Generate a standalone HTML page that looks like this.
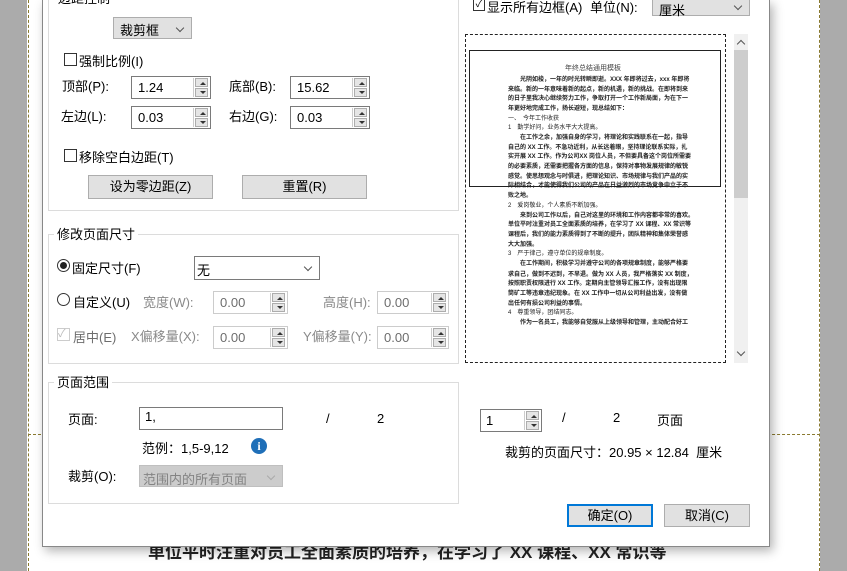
<!DOCTYPE html>
<html><head><meta charset="utf-8"><style>
*{margin:0;padding:0;box-sizing:border-box}
body{width:847px;height:571px;overflow:hidden;position:relative;background:#fff;font-family:"Liberation Sans","Noto Sans CJK SC",sans-serif;font-size:13px;color:#000}
.a{position:absolute;white-space:nowrap}
.gb{position:absolute;border:1px solid #dcdcdc}
.gl{position:absolute;background:#fff;padding:0 3px;line-height:14px}
.inp{position:absolute;border:1px solid #7a7a7a;background:#fff;height:23px;padding:3px 0 0 6px}
.dis{border-color:#ccc;color:#6d6d6d}
.spin{position:absolute;right:1px;top:1px;width:16px;height:19px;border-left:1px solid #ccc}
.spin i{display:block;height:9px;margin:0 1px;background:#e5e5e5;border:1px solid #adadad;position:relative}
.spin i+i{margin-top:1px}
.spin i:after{content:"";position:absolute;left:4px;top:2px;border:3px solid transparent}
.spin .u:after{border-bottom:3px solid #333;top:0}
.spin .d:after{border-top:3px solid #333;top:2px}
.btn{position:absolute;background:#e1e1e1;border:1px solid #adadad;text-align:center;line-height:22px}
.cb{position:absolute;width:13px;height:13px;border:1px solid #333;background:#fff}
.sel{position:absolute;border:1px solid #adadad;background:#e1e1e1;padding:2px 0 0 6px}
.chev{position:absolute;right:8px;top:7px;width:6px;height:6px;border-right:1px solid #555;border-bottom:1px solid #555;transform:rotate(45deg)}
.pl{position:absolute;left:508px;font-size:6px;font-weight:bold;color:#222;white-space:nowrap;letter-spacing:0}
</style></head><body>
<div class="a" style="left:0;top:0;width:27px;height:571px;background:#ababab"></div>
<div class="a" style="left:28px;top:0;height:571px;border-left:1px dashed #8a7a30"></div>
<div class="a" style="left:820px;top:0;width:27px;height:571px;background:#ababab"></div>
<div class="a" style="left:819px;top:0;height:571px;border-left:1px dashed #8a7a30"></div>
<div class="a" style="left:28px;top:434px;width:792px;border-top:1px dashed #8a7a30"></div>
<div class="a" style="left:148px;top:538px;font-size:17px;font-weight:bold;color:#222">单位平时注重对员工全面素质的培养，在学习了 XX 课程、XX 常识等</div>

<div class="a" style="left:42px;top:0;width:728px;height:547px;background:#fff;border:1px solid #888;border-top:none;box-shadow:3px 4px 10px rgba(0,0,0,.3)">
</div>
<div class="gb" style="left:48px;top:-10px;width:411px;height:221px"></div>
<div class="gl" style="left:55px;top:-8px">边距控制</div>
<div class="sel" style="left:113px;top:17px;width:79px;height:22px">裁剪框<div class="chev"></div></div>
<div class="cb" style="left:64px;top:53px"></div><div class="a" style="left:79px;top:51px">强制比例(I)</div>
<div class="a" style="left:62px;top:76px">顶部(P):</div>
<div class="inp" style="left:131px;top:76px;width:80px">1.24<div class="spin"><i class="u"></i><i class="d"></i></div></div>
<div class="a" style="left:229px;top:76px">底部(B):</div>
<div class="inp" style="left:290px;top:76px;width:80px">15.62<div class="spin"><i class="u"></i><i class="d"></i></div></div>
<div class="a" style="left:61px;top:106px">左边(L):</div>
<div class="inp" style="left:131px;top:106px;width:80px">0.03<div class="spin"><i class="u"></i><i class="d"></i></div></div>
<div class="a" style="left:229px;top:106px">右边(G):</div>
<div class="inp" style="left:290px;top:106px;width:80px">0.03<div class="spin"><i class="u"></i><i class="d"></i></div></div>
<div class="cb" style="left:64px;top:149px"></div><div class="a" style="left:79px;top:147px">移除空白边距(T)</div>
<div class="btn" style="left:88px;top:175px;width:125px;height:24px">设为零边距(Z)</div>
<div class="btn" style="left:242px;top:175px;width:125px;height:24px">重置(R)</div>

<div class="gb" style="left:48px;top:234px;width:411px;height:130px"></div>
<div class="gl" style="left:54px;top:228px">修改页面尺寸</div>
<div class="a" style="left:57px;top:259px;width:13px;height:13px;border:1px solid #333;border-radius:50%"><div style="position:absolute;left:2px;top:2px;width:7px;height:7px;border-radius:50%;background:#222"></div></div>
<div class="a" style="left:72px;top:258px">固定尺寸(F)</div>
<div class="a" style="left:194px;top:256px;width:126px;height:24px;border:1px solid #7a7a7a;padding:3px 0 0 2px">无<div class="chev"></div></div>
<div class="a" style="left:57px;top:293px;width:13px;height:13px;border:1px solid #333;border-radius:50%"></div>
<div class="a" style="left:73px;top:292px">自定义(U)</div>
<div class="a" style="left:143px;top:292px;color:#8a8a8a">宽度(W):</div>
<div class="inp dis" style="left:213px;top:291px;width:75px">0.00<div class="spin"><i class="u"></i><i class="d"></i></div></div>
<div class="a" style="left:323px;top:292px;color:#8a8a8a">高度(H):</div>
<div class="inp dis" style="left:377px;top:291px;width:72px">0.00<div class="spin"><i class="u"></i><i class="d"></i></div></div>
<div class="cb" style="left:57px;top:328px;border-color:#ccc;color:#bbb;font-size:11px;line-height:11px">✓</div>
<div class="a" style="left:73px;top:327px;color:#6d6d6d">居中(E)</div>
<div class="a" style="left:131px;top:326px;color:#8a8a8a">X偏移量(X):</div>
<div class="inp dis" style="left:213px;top:326px;width:75px">0.00<div class="spin"><i class="u"></i><i class="d"></i></div></div>
<div class="a" style="left:303px;top:326px;color:#8a8a8a">Y偏移量(Y):</div>
<div class="inp dis" style="left:377px;top:326px;width:72px">0.00<div class="spin"><i class="u"></i><i class="d"></i></div></div>

<div class="gb" style="left:48px;top:382px;width:411px;height:122px"></div>
<div class="gl" style="left:54px;top:376px">页面范围</div>
<div class="a" style="left:68px;top:409px">页面:</div>
<div class="a" style="left:139px;top:407px;width:144px;height:23px;border:1px solid #7a7a7a;padding:1px 0 0 5px">1,</div>
<div class="a" style="left:326px;top:411px">/</div>
<div class="a" style="left:377px;top:411px">2</div>
<div class="a" style="left:142px;top:438px">范例：1,5-9,12</div>
<div class="a" style="left:251px;top:438px;width:16px;height:16px;border-radius:50%;background:#1f6fb8;color:#fff;font-weight:bold;font-size:12px;text-align:center;line-height:16px;font-family:'Liberation Serif',serif">i</div>
<div class="a" style="left:68px;top:466px">裁剪(O):</div>
<div class="a" style="left:139px;top:465px;width:144px;height:22px;background:#ccc;border:1px solid #bfbfbf;color:#838383;padding:3px 0 0 3px">范围内的所有页面<div class="chev" style="border-color:#aaa"></div></div>

<div class="a" style="left:473px;top:-1px;width:12px;height:12px;border:1px solid #333;font-size:10px;line-height:10px;text-align:center">✓</div>
<div class="a" style="left:487px;top:-3px">显示所有边框(A)</div>
<div class="a" style="left:590px;top:-3px">单位(N):</div>
<div class="sel" style="left:652px;top:-8px;width:98px;height:24px;padding-top:7px">厘米<div class="chev" style="top:10px"></div></div>

<div class="a" style="left:465px;top:34px;width:261px;height:329px;border:1px dashed #222"></div>
<div class="a" style="left:469px;top:50px;width:252px;height:137px;border:1px solid #222"></div>
<div class="a" style="left:734px;top:34px;width:14px;height:329px;background:#f0f0f0"></div>
<div class="a" style="left:734px;top:50px;width:14px;height:148px;background:#cdcdcd"></div>
<div class="a" style="left:738px;top:41px;width:6px;height:6px;border-left:1px solid #555;border-top:1px solid #555;transform:rotate(45deg)"></div>
<div class="a" style="left:738px;top:349px;width:6px;height:6px;border-right:1px solid #555;border-bottom:1px solid #555;transform:rotate(45deg)"></div>
<div class="a" style="left:565px;top:63px;font-size:7px;color:#444">年终总结通用模板</div>
<div class="pl" style="top:74px;left:520px">光阴如梭，一年的时光转瞬即逝。XXX 年即将过去，xxx 年即将</div>
<div class="pl" style="top:84px">来临。新的一年意味着新的起点，新的机遇，新的挑战。在即将到来</div>
<div class="pl" style="top:93px">的日子里我决心继续努力工作，争取打开一个工作新局面，为在下一</div>
<div class="pl" style="top:103px">年更好地完成工作，扬长避短，现总结如下：</div>
<div class="pl" style="top:113px;font-weight:normal">一、　今年工作收获</div>
<div class="pl" style="top:122px;font-weight:normal">1　勤学好问，业务水平大大提高。</div>
<div class="pl" style="top:132px;left:520px">在工作之余，加强自身的学习，将理论和实践联系在一起，指导</div>
<div class="pl" style="top:142px">自己的 XX 工作。不急功近利，从长远着眼，坚持理论联系实际，扎</div>
<div class="pl" style="top:151px">实开展 XX 工作。作为公司XX 岗位人员，不但要具备这个岗位所需要</div>
<div class="pl" style="top:161px">的必要素质，还需要把握各方面的信息，保持对事物发展规律的敏锐</div>
<div class="pl" style="top:171px">感觉。使思想观念与时俱进，把理论知识、市场规律与我们产品的实</div>
<div class="pl" style="top:180px">际相结合，才能使得我们公司的产品在日益激烈的市场竞争中立于不</div>
<div class="pl" style="top:190px">败之地。</div>
<div class="pl" style="top:200px;font-weight:normal">2　爱岗敬业，个人素质不断加强。</div>
<div class="pl" style="top:210px;left:520px">来到公司工作以后，自己对这里的环境和工作内容都非常的喜欢。</div>
<div class="pl" style="top:219px">单位平时注重对员工全面素质的培养，在学习了 XX 课程、XX 常识等</div>
<div class="pl" style="top:229px">课程后，我们的能力素质得到了不断的提升，团队精神和集体荣誉感</div>
<div class="pl" style="top:239px">大大加强。</div>
<div class="pl" style="top:248px;font-weight:normal">3　严于律己，遵守单位的规章制度。</div>
<div class="pl" style="top:258px;left:520px">在工作期间，积极学习并遵守公司的各项规章制度，能够严格要</div>
<div class="pl" style="top:269px">求自己，做到不迟到，不早退。做为 XX 人员，我严格落实 XX 制度，</div>
<div class="pl" style="top:278px">按照职责权限进行 XX 工作。定期向主管领导汇报工作，没有出现限</div>
<div class="pl" style="top:288px">筒矿工等违章违纪现象。在 XX 工作中一切从公司利益出发，没有做</div>
<div class="pl" style="top:298px">出任何有损公司利益的事情。</div>
<div class="pl" style="top:307px;font-weight:normal">4　尊重领导，团结同志。</div>
<div class="pl" style="top:317px;left:520px">作为一名员工，我能够自觉服从上级领导和管理，主动配合好工</div>

<div class="a" style="left:480px;top:409px;width:62px;height:23px;border:1px solid #7a7a7a;padding:3px 0 0 5px">1<div class="spin"><i class="u"></i><i class="d"></i></div></div>
<div class="a" style="left:562px;top:410px">/</div>
<div class="a" style="left:613px;top:410px">2</div>
<div class="a" style="left:657px;top:410px">页面</div>
<div class="a" style="left:505px;top:442px">裁剪的页面尺寸：20.95 × 12.84 &nbsp;厘米</div>
<div class="btn" style="left:567px;top:504px;width:86px;height:23px;border:2px solid #0078d7;line-height:19px">确定(O)</div>
<div class="btn" style="left:664px;top:504px;width:86px;height:23px">取消(C)</div>
</body></html>
